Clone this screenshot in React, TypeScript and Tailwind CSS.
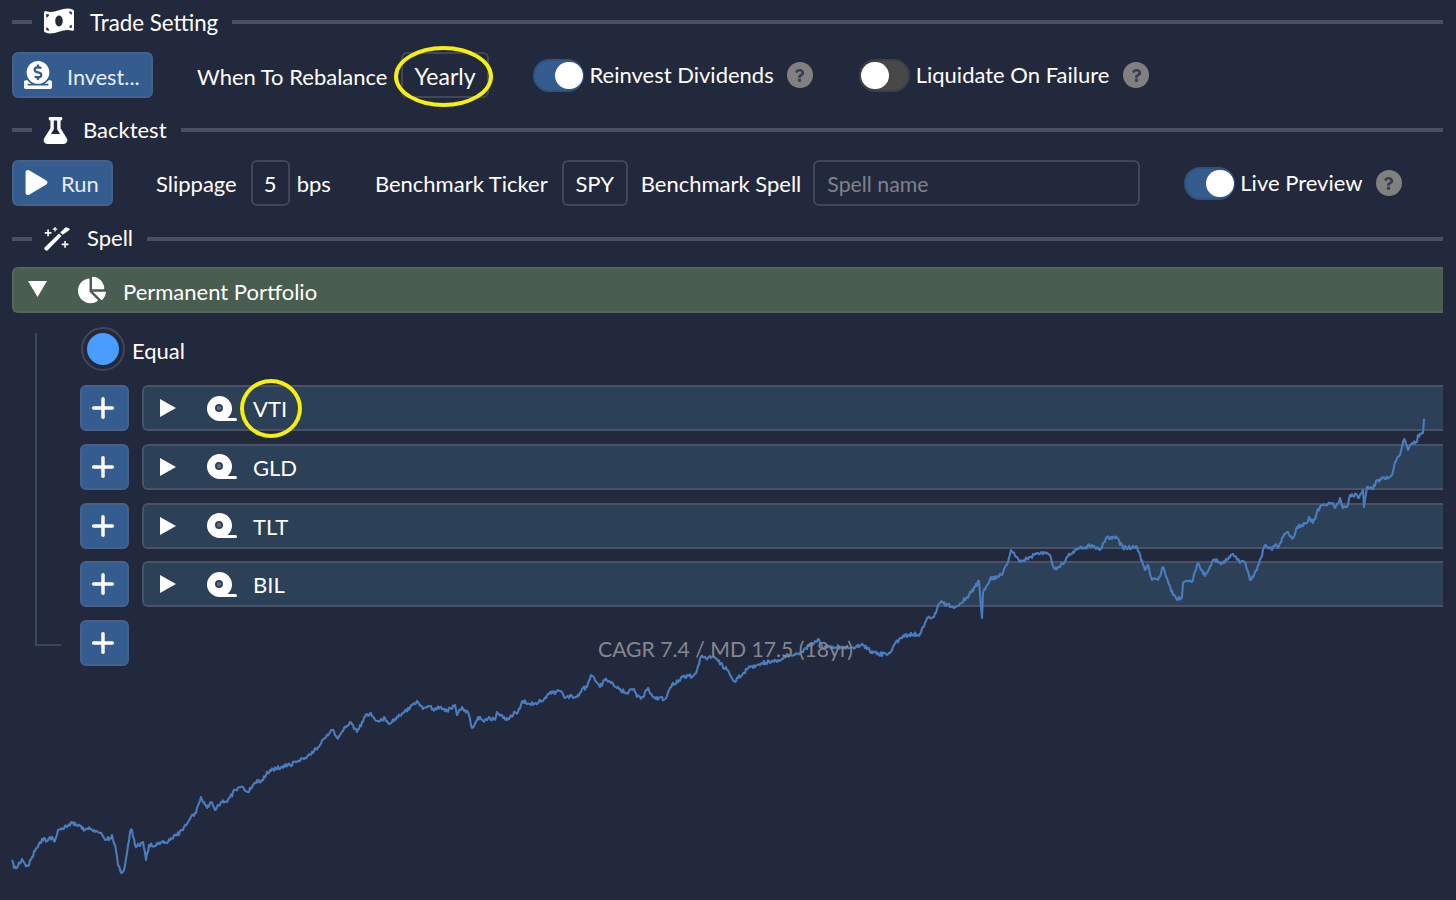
import type { ReactNode } from 'react'
import { FaChartPie, FaDonate, FaFlask, FaMoneyBillWave, FaPlay, FaQuestion } from 'react-icons/fa'
import { Plus } from 'lucide-react'

// traced key points of the equity curve, noise gets added on top
const KEYS: [number, number][] = [
  [12, 860], [14, 868], [18, 866], [22, 859], [25, 864], [28, 866], [32, 857], [37, 848], [44, 838], [47, 841], [52, 837], [55, 841], [58, 830],
  [62, 828], [68, 826], [72, 823], [78, 826], [85, 830], [90, 829], [96, 831], [100, 833], [106, 840], [110, 838], [112, 835], [115, 845], [118, 865],
  [121, 873], [124, 870], [127, 853], [130, 832], [132, 830], [135, 845], [140, 846], [143, 842], [146, 860], [149, 845], [155, 846], [162, 842],
  [166, 843], [170, 840], [177, 835], [183, 830], [188, 822], [192, 815], [196, 813], [201, 797], [207, 808], [211, 802], [215, 810], [222, 802],
  [227, 802], [235, 790], [243, 787], [248, 792], [255, 783], [262, 780], [270, 770], [290, 765], [305, 758], [320, 745], [332, 730], [337, 738],
  [350, 722], [357, 732], [365, 717], [371, 713], [377, 721], [385, 718], [388, 723], [403, 713], [412, 705], [418, 702], [423, 709], [428, 706],
  [433, 709], [440, 707], [447, 711], [455, 705], [457, 715], [462, 707], [469, 715], [472, 728], [478, 717], [483, 721], [490, 718], [495, 720],
  [497, 712], [503, 718], [509, 719], [515, 712], [518, 712], [523, 701], [530, 704], [543, 701], [548, 694], [560, 691], [565, 698], [572, 696],
  [577, 697], [582, 689], [587, 687], [591, 675], [595, 680], [600, 687], [605, 680], [612, 682], [617, 688], [627, 693], [634, 689], [637, 697],
  [643, 697], [648, 688], [653, 697], [665, 699], [672, 685], [683, 677], [693, 676], [697, 670], [701, 657], [715, 658], [727, 670], [735, 682],
  [738, 678], [750, 667], [762, 663], [778, 660], [788, 655], [800, 653], [818, 639], [822, 647], [837, 647], [850, 648], [863, 645], [873, 653],
  [887, 655], [900, 638], [908, 635], [920, 634], [927, 618], [933, 617], [940, 603], [955, 607], [967, 597], [975, 587], [979, 581], [982, 618],
  [983, 593], [990, 579], [1002, 575], [1007, 565], [1011, 550], [1020, 562], [1030, 557], [1042, 552], [1050, 555], [1054, 568], [1060, 567],
  [1067, 557], [1075, 550], [1092, 545], [1100, 550], [1107, 537], [1117, 538], [1123, 548], [1137, 547], [1145, 570], [1148, 565], [1152, 580],
  [1158, 580], [1163, 567], [1173, 595], [1178, 599], [1182, 597], [1183, 583], [1192, 582], [1198, 563], [1205, 576], [1213, 560], [1223, 563],
  [1233, 554], [1240, 563], [1245, 562], [1250, 580], [1257, 570], [1265, 545], [1272, 550], [1275, 545], [1278, 548], [1283, 537], [1288, 532],
  [1293, 538], [1297, 527], [1307, 523], [1309, 517], [1313, 523], [1317, 512], [1322, 505], [1333, 503], [1335, 508], [1340, 498], [1343, 508],
  [1347, 507], [1350, 495], [1357, 495], [1358, 498], [1363, 490], [1364, 507], [1367, 487], [1372, 489], [1378, 480], [1392, 475], [1395, 462],
  [1400, 455], [1404, 439], [1408, 450], [1412, 443], [1417, 442], [1418, 435], [1423, 433], [1424, 419],
]

function curvePoints() {
  let seed = 17
  const rand = () => {
    seed = (seed * 16807) % 2147483647
    return seed / 2147483647 - 0.5
  }
  const out: string[] = []
  for (let i = 0; i < KEYS.length - 1; i++) {
    const [x0, y0] = KEYS[i]
    const [x1, y1] = KEYS[i + 1]
    const steps = Math.max(1, Math.round(x1 - x0))
    for (let s = 0; s < steps; s++) {
      const t = s / steps
      const noise = s === 0 ? 0 : rand() * 4
      out.push(`${(x0 + (x1 - x0) * t).toFixed(1)},${(y0 + (y1 - y0) * t + noise).toFixed(1)}`)
    }
  }
  out.push('1424,419')
  return out.join(' ')
}

function Section({ icon, title, titleClass }: { icon: ReactNode; title: string; titleClass: string }) {
  return (
    <div className="flex items-center h-[30px]">
      <div className="w-5 h-1 bg-[#4b4f63]" />
      <div className="w-[32px] ml-3 flex items-center text-white">{icon}</div>
      <span className={titleClass}>{title}</span>
      <div className="flex-1 h-1 bg-[#4b4f63] ml-[14px]" />
    </div>
  )
}

function Toggle({ on }: { on: boolean }) {
  return (
    <div className={`w-[51px] h-[33px] rounded-full border-2 flex items-center ${on ? 'bg-[#355c8f] border-[#2f5281] justify-end' : 'bg-[#484848] border-[#3d3f47] justify-start'}`}>
      <div className={`w-[28px] h-[27px] rounded-full bg-white ${on ? '-mr-px' : ''}`} />
    </div>
  )
}

function Help() {
  return (
    <div className="w-[26px] h-[26px] rounded-full bg-[#808080] flex items-center justify-center">
      <FaQuestion className="text-[#3a3f50] text-[13px]" />
    </div>
  )
}

function Box({ children, className }: { children: ReactNode; className: string }) {
  return <div className={`h-[46px] rounded-md border-2 border-[#42465a] flex items-center ${className}`}>{children}</div>
}

function PlusButton() {
  return (
    <div className="w-[49px] h-[46px] pr-[3px] rounded-md bg-[#355c8f] border-2 border-[#44618a] flex items-center justify-center">
      <Plus size={32} strokeWidth={2.6} className="text-white" />
    </div>
  )
}

function TapeIcon() {
  return (
    <svg viewBox="0 0 30 25" className="ml-[30px] w-[30px] h-[25px] fill-white">
      <path fillRule="evenodd" d="M12.5 0a12.5 12.5 0 1 0 0 25a12.5 12.5 0 1 0 0-25zM12 8a4 4 0 1 1 0 8a4 4 0 1 1 0-8z" />
      <circle cx="12" cy="12" r="2.2" fill="#5d6d82" />
      <rect x="12" y="22" width="18" height="3" rx="1.5" />
    </svg>
  )
}

function WandIcon() {
  return (
    <svg viewBox="0 0 26 24" className="w-[26px] h-[24px] fill-white">
      <path d="M0.6 20.4 L15 6.6 L17.6 9 L3.4 23.4 Q2.6 24 1.8 23.4 L0.6 22.2 Q0 21.2 0.6 20.4 Z" />
      <path d="M16.2 5.4 L21.4 0.4 Q22 0 22.6 0.4 L25.4 1.6 Q26 2.4 25.4 3 L18.8 7.8 Z" />
      <path d="M3.3 2.5 h1.6 v2.6 h2.6 v1.6 h-2.6 v2.6 h-1.6 v-2.6 h-2.6 v-1.6 h2.6 Z" />
      <path d="M10.4 0 h1.2 v1.6 h1.6 v1.2 h-1.6 v1.6 h-1.2 v-1.6 h-1.6 v-1.2 h1.6 Z" />
      <path d="M20.3 14 h1.6 v2.6 h2.6 v1.6 h-2.6 v2.6 h-1.6 v-2.6 h-2.6 v-1.6 h2.6 Z" />
    </svg>
  )
}

function TickerRow({ name }: { name: string }) {
  return (
    <div className="flex h-[46px]">
      <PlusButton />
      <div className="flex-1 ml-[13px] rounded-l-md border-2 border-r-0 border-[#4a5268] bg-[#2c4058] flex items-center">
        <svg viewBox="0 0 18 18" className="ml-[15px] w-[18px] h-[18px] fill-white">
          <path d="M1 0 L17 9 L1 18 Z" />
        </svg>
        <TapeIcon />
        <span className="ml-[16px] pt-[2px]">{name}</span>
      </div>
    </div>
  )
}

export default function App() {
  return (
    <div
      className="relative w-[1456px] h-[900px] overflow-hidden bg-[#23293c] text-white text-[22px] leading-[30px] pl-3 pr-[13px] pt-[7px]"
      style={{ fontFamily: '"Lato", "Liberation Sans", sans-serif' }}
    >
      <Section icon={<FaMoneyBillWave className="text-[30px] scale-y-[1.2] -translate-y-px" />} title="Trade Setting" titleClass="ml-[14px] pt-[2px] text-[22.3px]" />

      <div className="flex items-center h-[46px] mt-[15px]">
        <div className="w-[141px] h-[46px] rounded-md bg-[#355c8f] border-2 border-[#44618a] flex items-center pl-[10px]">
          <FaDonate className="text-[28px]" />
          <span className="ml-[15px] pt-[4px] text-[21.7px] text-[#e6ecf5]">Invest...</span>
        </div>
        <span className="ml-[44px] pt-[4px]">When To Rebalance</span>
        <Box className="ml-[13px] w-[88px] pl-[12px] pt-[2px] text-[23px]">Yearly</Box>
        <div className="ml-[44px]"><Toggle on /></div>
        <span className="ml-[6px]">Reinvest Dividends</span>
        <div className="ml-[13px]"><Help /></div>
        <div className="ml-[46px]"><Toggle on={false} /></div>
        <span className="ml-[6px]">Liquidate On Failure</span>
        <div className="ml-[14px]"><Help /></div>
      </div>

      <div className="mt-[17px]">
        <Section icon={<FaFlask className="text-[27px] -ml-[2px]" />} title="Backtest" titleClass="ml-[7px]" />
      </div>

      <div className="flex items-center h-[46px] mt-[15px]">
        <div className="w-[101px] h-[46px] rounded-md bg-[#355c8f] border-2 border-[#44618a] flex items-center pl-[10px]">
          <FaPlay className="text-[25px] -mt-[2px]" />
          <span className="ml-[12px] pt-[2px] text-[#e6ecf5]">Run</span>
        </div>
        <span className="ml-[43px] pt-[2px]">Slippage</span>
        <Box className="ml-[14px] w-[39px] justify-center pt-[2px]">5</Box>
        <span className="ml-[7px] pt-[2px]">bps</span>
        <span className="ml-[44px] pt-[2px]">Benchmark Ticker</span>
        <Box className="ml-[14px] w-[66px] justify-center pt-[2px]">SPY</Box>
        <span className="ml-[13px] pt-[2px]">Benchmark Spell</span>
        <Box className="ml-[12px] w-[327px] pl-[12px] pt-[2px] text-[21.3px] text-[#7f828c]">Spell name</Box>
        <div className="ml-[44px]"><Toggle on /></div>
        <span className="ml-[5px]">Live Preview</span>
        <div className="ml-[13px]"><Help /></div>
      </div>

      <div className="mt-[18px]">
        <Section icon={<WandIcon />} title="Spell" titleClass="ml-[11px] -mt-[2px]" />
      </div>

      <div className="flex items-center h-[46px] mt-[13px] rounded-l-md border-2 border-r-0 border-[#56665f] bg-[#495d50]">
        <svg viewBox="0 0 19 16" className="ml-[14px] w-[19px] h-[16px] -mt-[3px] fill-white">
          <path d="M0 0 L19 0 L9.5 16 Z" />
        </svg>
        <FaChartPie className="ml-[31px] text-[28px]" />
        <span className="ml-[17px] pt-[4px]">Permanent Portfolio</span>
      </div>

      <div className="flex mt-[14px]">
        <div className="ml-[23px] w-[26px] h-[313px] mt-[6px] border-l-2 border-b-2 border-[#3c4a50]" />
        <div className="flex-1 ml-[19px]">
          <div className="flex items-center h-[44px]">
            <div className="w-[44px] h-[44px] rounded-full border-2 border-[#42465a] flex items-center justify-center ml-px">
              <div className="w-8 h-8 rounded-full bg-[#4a9dff]" />
            </div>
            <span className="ml-[7px] pt-[4px]">Equal</span>
          </div>
          <div className="flex flex-col gap-[12.75px] mt-[14px]">
            <TickerRow name="VTI" />
            <TickerRow name="GLD" />
            <TickerRow name="TLT" />
            <TickerRow name="BIL" />
            <PlusButton />
          </div>
        </div>
      </div>

      {/* plot drawn over the spell tree */}
      <svg viewBox="0 0 1456 900" className="absolute inset-0 w-[1456px] h-[900px] pointer-events-none">
        <polyline points={curvePoints()} fill="none" stroke="#4b7cbd" strokeWidth="2.1" strokeLinejoin="round" />
      </svg>
      <span className="absolute left-[598px] top-[634px] text-[21.2px] text-[#85878f]">CAGR 7.4 / MD 17.5 (18yr)</span>

      {/* yellow annotations on top of the screenshot */}
      <div className="absolute left-[394px] top-[46px] w-[99px] h-[61px] rounded-[50%] border-[4px] border-[#f5f010]" />
      <div className="absolute left-[240px] top-[379px] w-[62px] h-[59px] rounded-[50%] border-[4px] border-[#f5f010]" />
    </div>
  )
}
